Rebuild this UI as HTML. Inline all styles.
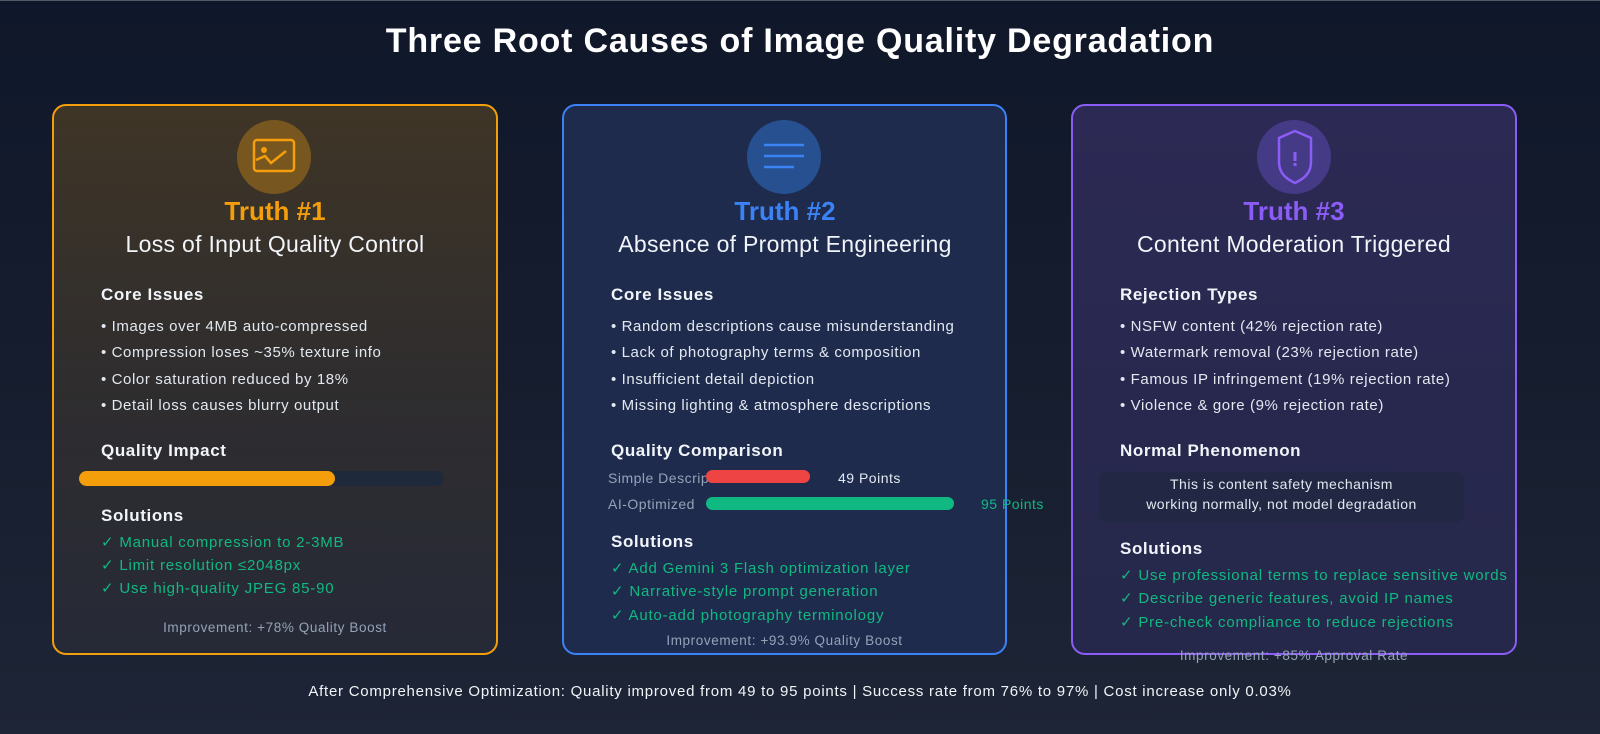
<!DOCTYPE html>
<html><head><meta charset="utf-8"><style>
*{margin:0;padding:0;box-sizing:border-box}
body{width:1600px;height:734px;overflow:hidden;font-family:"Liberation Sans",sans-serif;background:linear-gradient(180deg,#0f172a 0%,#151d2e 50%,#1e2536 100%);position:relative;color:#e2e8f0}
.t{position:absolute;white-space:nowrap;line-height:1.2}
.card{position:absolute;top:104px;height:551px;border:2px solid;border-radius:14px}
.c{text-align:center;width:446px}
.h{font-weight:bold;font-size:17px;color:#f1f5f9;letter-spacing:0.6px}
.b{font-size:15px;color:#e2e8f0;letter-spacing:0.6px}
.g{font-size:15px;color:#10b981;letter-spacing:0.8px}
.imp{font-size:13.5px;color:#94a3b8;letter-spacing:0.6px}
.circ{position:absolute;width:74px;height:74px;border-radius:50%}
</style></head><body>
<div style="position:absolute;top:0;left:0;width:1600px;height:1px;background:#555b66"></div>
<div class="t" style="left:0;width:1600px;text-align:center;top:21px;font-size:34px;font-weight:bold;color:#fff;letter-spacing:0.8px">Three Root Causes of Image Quality Degradation</div>

<div class="card" style="left:52px;width:446px;border-color:#f59e0b;background:linear-gradient(180deg,#3f3526 0%,#2f2d2e 50%,#262a37 100%)"></div>
<div class="card" style="left:562px;width:445px;border-color:#3b82f6;background:#1e2b4d"></div>
<div class="card" style="left:1071px;width:446px;border-color:#8b5cf6;background:linear-gradient(180deg,#2c2954 0%,#25284a 100%)"></div>

<!-- card1 -->
<div class="circ" style="left:237px;top:120px;background:#77571f"></div>
<svg style="position:absolute;left:252px;top:138px" width="44" height="36" viewBox="0 0 44 36"><rect x="2" y="2" width="40" height="31" rx="3" fill="none" stroke="#f59e0b" stroke-width="2.5"/><circle cx="12" cy="12" r="3" fill="#f59e0b"/><path d="M4 22 L13 18 L19 25 L34 13" fill="none" stroke="#f59e0b" stroke-width="2.5"/></svg>
<div class="t c" style="left:52px;top:196px;font-size:26px;font-weight:bold;color:#f59e0b">Truth #1</div>
<div class="t c" style="left:52px;top:231px;font-size:23px;color:#f1f5f9;letter-spacing:0.3px">Loss of Input Quality Control</div>
<div class="t h" style="left:101px;top:285px">Core Issues</div>
<div class="t b" style="left:101px;top:318px">• Images over 4MB auto-compressed</div>
<div class="t b" style="left:101px;top:344px">• Compression loses ~35% texture info</div>
<div class="t b" style="left:101px;top:371px">• Color saturation reduced by 18%</div>
<div class="t b" style="left:101px;top:397px">• Detail loss causes blurry output</div>
<div class="t h" style="left:101px;top:441px">Quality Impact</div>
<div style="position:absolute;left:79px;top:471px;width:365px;height:15px;border-radius:8px;background:#1e293b"></div>
<div style="position:absolute;left:79px;top:471px;width:256px;height:15px;border-radius:8px;background:#f59e0b"></div>
<div class="t h" style="left:101px;top:506px">Solutions</div>
<div class="t g" style="left:101px;top:534px">✓ Manual compression to 2-3MB</div>
<div class="t g" style="left:101px;top:557px">✓ Limit resolution ≤2048px</div>
<div class="t g" style="left:101px;top:580px">✓ Use high-quality JPEG 85-90</div>
<div class="t c imp" style="left:52px;top:620px">Improvement: +78% Quality Boost</div>

<!-- card2 -->
<div class="circ" style="left:747px;top:120px;background:#26508f"></div>
<svg style="position:absolute;left:764px;top:142px" width="42" height="30"><path d="M16 3H56M16 14H56M16 25H46" transform="translate(-16 0)" stroke="#3b82f6" stroke-width="2.5"/></svg>
<div class="t c" style="left:562px;top:196px;font-size:26px;font-weight:bold;color:#3b82f6">Truth #2</div>
<div class="t c" style="left:562px;top:231px;font-size:23px;color:#f1f5f9;letter-spacing:0.3px">Absence of Prompt Engineering</div>
<div class="t h" style="left:611px;top:285px">Core Issues</div>
<div class="t b" style="left:611px;top:318px">• Random descriptions cause misunderstanding</div>
<div class="t b" style="left:611px;top:344px">• Lack of photography terms &amp; composition</div>
<div class="t b" style="left:611px;top:371px">• Insufficient detail depiction</div>
<div class="t b" style="left:611px;top:397px">• Missing lighting &amp; atmosphere descriptions</div>
<div class="t h" style="left:611px;top:441px">Quality Comparison</div>
<div class="t" style="left:608px;top:470px;font-size:14px;color:#94a3b8;letter-spacing:0.5px">Simple Description</div>
<div style="position:absolute;left:706px;top:470px;width:104px;height:13px;border-radius:7px;background:#ef4444"></div>
<div class="t" style="left:838px;top:470px;font-size:14px;color:#e2e8f0;letter-spacing:0.5px">49 Points</div>
<div class="t" style="left:608px;top:496px;font-size:14px;color:#94a3b8;letter-spacing:0.5px">AI-Optimized</div>
<div style="position:absolute;left:706px;top:497px;width:248px;height:13px;border-radius:7px;background:#10b981"></div>
<div class="t" style="left:981px;top:496px;font-size:14px;color:#10b981;letter-spacing:0.5px">95 Points</div>
<div class="t h" style="left:611px;top:532px">Solutions</div>
<div class="t g" style="left:611px;top:560px">✓ Add Gemini 3 Flash optimization layer</div>
<div class="t g" style="left:611px;top:583px">✓ Narrative-style prompt generation</div>
<div class="t g" style="left:611px;top:607px">✓ Auto-add photography terminology</div>
<div class="t imp" style="left:562px;width:445px;text-align:center;top:633px">Improvement: +93.9% Quality Boost</div>

<!-- card3 -->
<div class="circ" style="left:1257px;top:120px;background:#443a85"></div>
<svg style="position:absolute;left:1275px;top:128px" width="40" height="58" viewBox="0 0 40 58"><path d="M20 3 L36 10 V34 C36 46 28 51 20 55 C12 51 4 46 4 34 V10 Z" fill="none" stroke="#8b5cf6" stroke-width="2.5"/><rect x="18.5" y="24" width="3" height="9" fill="#8b5cf6"/><rect x="18.5" y="35" width="3" height="3" fill="#8b5cf6"/></svg>
<div class="t c" style="left:1071px;top:196px;font-size:26px;font-weight:bold;color:#8b5cf6">Truth #3</div>
<div class="t c" style="left:1071px;top:231px;font-size:23px;color:#f1f5f9;letter-spacing:0.3px">Content Moderation Triggered</div>
<div class="t h" style="left:1120px;top:285px">Rejection Types</div>
<div class="t b" style="left:1120px;top:318px">• NSFW content (42% rejection rate)</div>
<div class="t b" style="left:1120px;top:344px">• Watermark removal (23% rejection rate)</div>
<div class="t b" style="left:1120px;top:371px">• Famous IP infringement (19% rejection rate)</div>
<div class="t b" style="left:1120px;top:397px">• Violence &amp; gore (9% rejection rate)</div>
<div class="t h" style="left:1120px;top:441px">Normal Phenomenon</div>
<div style="position:absolute;left:1099px;top:472px;width:365px;height:50px;border-radius:8px;background:#222843"></div>
<div class="t" style="left:1099px;width:365px;text-align:center;top:476px;font-size:14px;color:#e2e8f0;letter-spacing:0.5px">This is content safety mechanism</div>
<div class="t" style="left:1099px;width:365px;text-align:center;top:496px;font-size:14px;color:#e2e8f0;letter-spacing:0.5px">working normally, not model degradation</div>
<div class="t h" style="left:1120px;top:539px">Solutions</div>
<div class="t g" style="left:1120px;top:567px">✓ Use professional terms to replace sensitive words</div>
<div class="t g" style="left:1120px;top:590px">✓ Describe generic features, avoid IP names</div>
<div class="t g" style="left:1120px;top:614px">✓ Pre-check compliance to reduce rejections</div>
<div class="t imp" style="left:1071px;width:446px;text-align:center;top:648px">Improvement: +85% Approval Rate</div>

<div class="t" style="left:0;width:1600px;text-align:center;top:683px;font-size:15px;color:#f1f5f9;letter-spacing:0.75px">After Comprehensive Optimization: Quality improved from 49 to 95 points | Success rate from 76% to 97% | Cost increase only 0.03%</div>
</body></html>
